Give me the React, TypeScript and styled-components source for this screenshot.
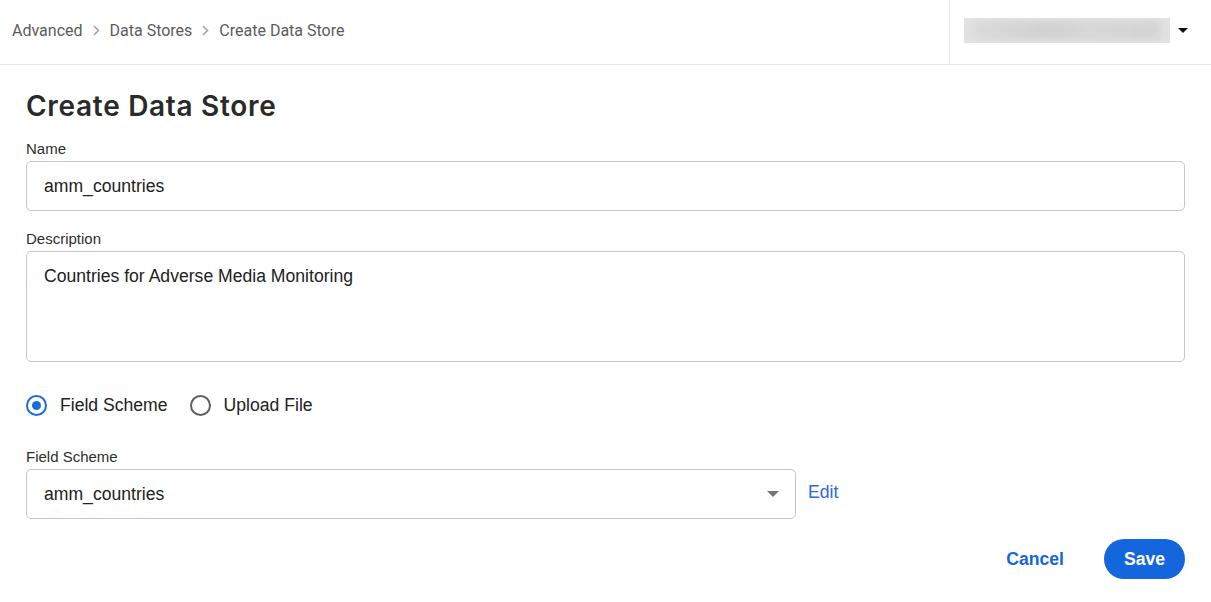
import * as React from "react";
import styled, {createGlobalStyle} from "styled-components";

const GlobalStyle = createGlobalStyle`
  html, body {
    margin: 0;
    padding: 0;
    background: #ffffff;
  }
  * {
    box-sizing: border-box;
  }
`;

const Page = styled.div`
  width: 100%;
  min-height: 100vh;
  font-family: "Liberation Sans", Arial, sans-serif;
  color: #222222;
`;

const Header = styled.header`
  height: 65px;
  display: flex;
  align-items: stretch;
  border-bottom: 1px solid #e6e6e6;
`;

const Crumbs = styled.nav`
  flex: 1;
  display: flex;
  align-items: center;
  padding: 0 0 4px 12px;
  gap: 10px;
  font-family: Roboto, "Liberation Sans", sans-serif;
  font-size: 16px;
  color: #5c5c5c;
`;

const Crumb = styled.span`
  white-space: nowrap;
`;

const UserBox = styled.div`
  width: 262px;
  display: flex;
  align-items: center;
  padding: 0 14px 4px 14px;
  border-left: 1px solid #e6e6e6;
  gap: 8px;
`;

const UserName = styled.div`
  width: 206px;
  height: 25px;
  background: #e2e2e2;
  position: relative;
  overflow: hidden;

  &::after {
    content: "";
    position: absolute;
    inset: 4px 10px;
    background: linear-gradient(90deg, #d9d9d9, #cfcfcf 40%, #d6d6d6 60%, #d2d2d2);
    filter: blur(4px);
  }
`;

const Caret = styled.span<{ $color: string; $w: number; $h: number }>`
  width: 0;
  height: 0;
  border-left: ${p => p.$w / 2}px solid transparent;
  border-right: ${p => p.$w / 2}px solid transparent;
  border-top: ${p => p.$h}px solid ${p => p.$color};
`;

const Main = styled.main`
  padding: 21px 26px 0 26px;
`;

const Title = styled.h1`
  margin: 0 0 14px 0;
  font-family: Inter, Lato, "Liberation Sans", sans-serif;
  font-weight: 600;
  font-size: 28px;
  letter-spacing: 0.7px;
  line-height: 40px;
  color: #2a2a2a;
`;

const Field = styled.div<{ $gap?: number }>`
  display: flex;
  flex-direction: column;
  margin-bottom: ${p => p.$gap ?? 0}px;
`;

const Label = styled.label`
  font-size: 15px;
  line-height: 18px;
  color: #2e2e2e;
  margin-bottom: 3px;
`;

const TextInput = styled.div<{ $tall?: boolean }>`
  height: ${p => (p.$tall ? 111 : 50)}px;
  border: 1px solid #c6c6c6;
  border-radius: 5px;
  padding: ${p => (p.$tall ? "14px 17px" : "0 17px")};
  display: flex;
  align-items: ${p => (p.$tall ? "flex-start" : "center")};
  font-size: 17.6px;
  color: #222222;
`;

const RadioRow = styled.div`
  display: flex;
  align-items: center;
  gap: 22px;
  height: 24px;
  margin: 31px 0 31px 0;
`;

const RadioOption = styled.label`
  display: flex;
  align-items: center;
  gap: 13px;
  font-size: 17.6px;
  color: #222222;
`;

const RadioMark = styled.span<{ $on: boolean }>`
  width: 21px;
  height: 21px;
  border-radius: 50%;
  border: 2px solid ${p => (p.$on ? "#1a6be0" : "#5f5f5f")};
  display: flex;
  align-items: center;
  justify-content: center;

  &::after {
    content: "";
    width: 9px;
    height: 9px;
    border-radius: 50%;
    background: ${p => (p.$on ? "#1a6be0" : "transparent")};
  }
`;

const SelectRow = styled.div`
  display: flex;
  align-items: center;
  gap: 12px;
`;

const Select = styled.div`
  width: 770px;
  height: 50px;
  border: 1px solid #c6c6c6;
  border-radius: 5px;
  padding: 0 16px 0 17px;
  display: flex;
  align-items: center;
  justify-content: space-between;
  font-size: 17.6px;
`;

const LinkText = styled.a`
  font-size: 17.6px;
  color: #2c6be0;
  text-decoration: none;
  cursor: pointer;
  margin-top: -4px;
`;

const Footer = styled.div`
  display: flex;
  justify-content: flex-end;
  align-items: center;
  gap: 20px;
  margin-top: 20px;
`;

const Button = styled.button<{ $primary?: boolean }>`
  height: 40px;
  padding: 0 20px;
  border: none;
  border-radius: 20px;
  font-family: "Liberation Sans", Arial, sans-serif;
  font-weight: 700;
  font-size: 17.6px;
  background: ${p => (p.$primary ? "#1366dc" : "transparent")};
  color: ${p => (p.$primary ? "#ffffff" : "#1366dc")};
  cursor: pointer;
`;

const Chevron = () => (
    <svg width="7" height="11" viewBox="0 0 7 11">
        <path d="M1 1 L5.5 5.5 L1 10" fill="none" stroke="#a3a3a3" strokeWidth="1.6"/>
    </svg>
);

export default function App() {
    const [source, setSource] = React.useState("scheme");

    return (
        <Page>
            <GlobalStyle/>
            <Header>
                <Crumbs>
                    <Crumb>Advanced</Crumb>
                    <Chevron/>
                    <Crumb>Data Stores</Crumb>
                    <Chevron/>
                    <Crumb>Create Data Store</Crumb>
                </Crumbs>
                <UserBox>
                    <UserName/>
                    <Caret $color="#111111" $w={10} $h={5}/>
                </UserBox>
            </Header>
            <Main>
                <Title>Create Data Store</Title>
                <Field $gap={19}>
                    <Label>Name</Label>
                    <TextInput>amm_countries</TextInput>
                </Field>
                <Field>
                    <Label>Description</Label>
                    <TextInput $tall>Countries for Adverse Media Monitoring</TextInput>
                </Field>
                <RadioRow>
                    <RadioOption onClick={() => setSource("scheme")}>
                        <RadioMark $on={source === "scheme"}/>
                        Field Scheme
                    </RadioOption>
                    <RadioOption onClick={() => setSource("file")}>
                        <RadioMark $on={source === "file"}/>
                        Upload File
                    </RadioOption>
                </RadioRow>
                <Field>
                    <Label>Field Scheme</Label>
                    <SelectRow>
                        <Select>
                            amm_countries
                            <Caret $color="#757575" $w={13} $h={6}/>
                        </Select>
                        <LinkText>Edit</LinkText>
                    </SelectRow>
                </Field>
                <Footer>
                    <Button>Cancel</Button>
                    <Button $primary>Save</Button>
                </Footer>
            </Main>
        </Page>
    );
}
